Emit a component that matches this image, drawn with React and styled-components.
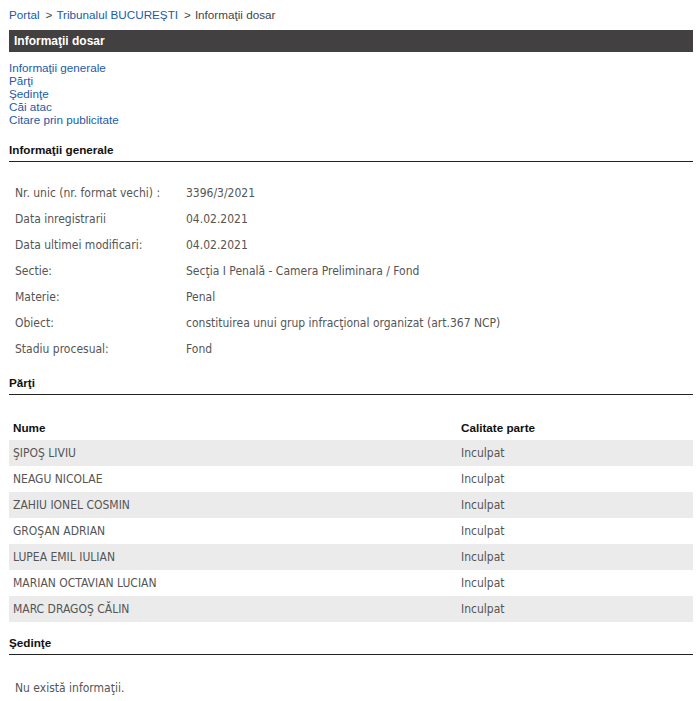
import React from 'react'
import styled, { createGlobalStyle } from 'styled-components'

const GlobalStyle = createGlobalStyle`
  html, body {
    margin: 0;
    padding: 0;
    background: #fff;
  }
  body {
    font-family: "Liberation Sans", Arial, sans-serif;
    font-size: 11.7px;
  }
`

const Page = styled.div`
  width: 684px;
  padding: 7px 0 0 9px;
`

const Crumbs = styled.div`
  display: flex;
  align-items: center;
  height: 15px;
  color: #444;
  font-size: 11.7px;
`

const CrumbLink = styled.a`
  color: #1b5ba8;
  text-decoration: none;
`

const Sep = styled.span`
  margin: 0 4px 0 6px;
  color: #444;
`

const TitleBar = styled.div`
  margin-top: 8px;
  height: 22px;
  background: #424041;
  color: #fff;
  font-weight: bold;
  font-size: 12px;
  display: flex;
  align-items: center;
  padding-left: 5px;
`

const Nav = styled.div`
  display: flex;
  flex-direction: column;
  margin-top: 9px;
`

const NavLink = styled.a`
  color: #1b5ba8;
  text-decoration: none;
  line-height: 13px;
  font-size: 11.7px;
`

const SectionTitle = styled.div`
  margin-top: ${p => p.$top || 17}px;
  padding-bottom: 3px;
  border-bottom: 1px solid #222;
  font-weight: bold;
  font-size: 11.7px;
  color: #111;
  line-height: 16px;
`

const InfoList = styled.div`
  padding: 18px 0 0 6px;
`

const InfoRow = styled.div`
  display: grid;
  grid-template-columns: 171px 1fr;
  height: 26px;
  align-items: center;
  font-family: "DejaVu Sans Condensed", "DejaVu Sans", sans-serif;
  font-size: 12px;
  color: #555;
`

const Table = styled.div`
  margin-top: 19px;
`

const Row = styled.div`
  display: grid;
  grid-template-columns: 448px 1fr;
  height: 26px;
  align-items: center;
  padding-left: 4px;
  background: ${p => (p.$shade ? '#ebebeb' : 'transparent')};
  font-family: ${p => (p.$head ? '"Liberation Sans", Arial' : '"DejaVu Sans Condensed", "DejaVu Sans"')}, sans-serif;
  font-weight: ${p => (p.$head ? 'bold' : 'normal')};
  font-size: ${p => (p.$head ? '11.7px' : '12px')};
  color: ${p => (p.$head ? '#111' : '#555')};
`

const Empty = styled.div`
  padding: 26px 0 0 6px;
  font-family: "DejaVu Sans Condensed", "DejaVu Sans", sans-serif;
  font-size: 12px;
  color: #555;
`

const info = [
  ['Nr. unic (nr. format vechi) :', '3396/3/2021'],
  ['Data inregistrarii', '04.02.2021'],
  ['Data ultimei modificari:', '04.02.2021'],
  ['Sectie:', 'Secţia I Penală - Camera Preliminara / Fond'],
  ['Materie:', 'Penal'],
  ['Obiect:', 'constituirea unui grup infracţional organizat (art.367 NCP)'],
  ['Stadiu procesual:', 'Fond'],
]

const parti = [
  'ŞIPOŞ LIVIU',
  'NEAGU NICOLAE',
  'ZAHIU IONEL COSMIN',
  'GROŞAN ADRIAN',
  'LUPEA EMIL IULIAN',
  'MARIAN OCTAVIAN LUCIAN',
  'MARC DRAGOŞ CĂLIN',
]

function App() {
  return (
    <Page>
      <GlobalStyle />
      <Crumbs>
        <CrumbLink href="#">Portal</CrumbLink>
        <Sep>&gt;</Sep>
        <CrumbLink href="#">Tribunalul BUCUREŞTI</CrumbLink>
        <Sep>&gt;</Sep>
        <span>Informaţii dosar</span>
      </Crumbs>

      <TitleBar>Informaţii dosar</TitleBar>

      <Nav>
        <NavLink href="#">Informaţii generale</NavLink>
        <NavLink href="#">Părţi</NavLink>
        <NavLink href="#">Şedinţe</NavLink>
        <NavLink href="#">Căi atac</NavLink>
        <NavLink href="#">Citare prin publicitate</NavLink>
      </Nav>

      <SectionTitle $top={16}>Informaţii generale</SectionTitle>
      <InfoList>
        {info.map(([k, v]) => (
          <InfoRow key={k}>
            <span>{k}</span>
            <span>{v}</span>
          </InfoRow>
        ))}
      </InfoList>

      <SectionTitle $top={13}>Părţi</SectionTitle>
      <Table>
        <Row $head>
          <span>Nume</span>
          <span>Calitate parte</span>
        </Row>
        {parti.map((n, i) => (
          <Row key={n} $shade={i % 2 === 0}>
            <span>{n}</span>
            <span>Inculpat</span>
          </Row>
        ))}
      </Table>

      <SectionTitle $top={13}>Şedinţe</SectionTitle>
      <Empty>Nu există informaţii.</Empty>
    </Page>
  )
}

export default App
